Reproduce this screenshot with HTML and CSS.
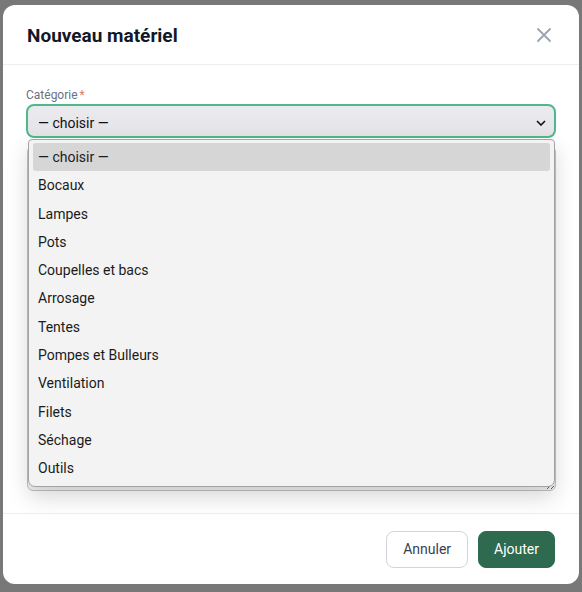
FILE: index.html
```html
<!DOCTYPE html>
<html lang="fr">
<head>
    <meta charset="UTF-8">
    <meta name="viewport" content="width=device-width, initial-scale=1.0">
    <title>Nouveau matériel</title>
    <link rel="stylesheet" href="styles.css">
</head>
<body>

<div class="modal">
    <div class="modal-header">
        <h2>Nouveau matériel</h2>
        <button class="close" aria-label="Fermer">
            <svg width="16" height="16" viewBox="0 0 16 16"><path d="M2 2 L14 14 M14 2 L2 14" stroke="#9ca3af" stroke-width="1.8" stroke-linecap="round" fill="none"/></svg>
        </button>
    </div>

    <div class="modal-body">
        <div class="form-group">
            <label for="categorie">Catégorie<span class="req">*</span></label>
            <div class="select">
                <span>— choisir —</span>
                <svg width="10" height="6" viewBox="0 0 10 6"><path d="M1 1 L5 5 L9 1" stroke="#111" stroke-width="1.6" fill="none"/></svg>
            </div>
            <ul class="dropdown">
                <li class="active">— choisir —</li>
                <li>Bocaux</li>
                <li>Lampes</li>
                <li>Pots</li>
                <li>Coupelles et bacs</li>
                <li>Arrosage</li>
                <li>Tentes</li>
                <li>Pompes et Bulleurs</li>
                <li>Ventilation</li>
                <li>Filets</li>
                <li>Séchage</li>
                <li>Outils</li>
            </ul>
        </div>
        <textarea class="notes"></textarea>
    </div>

    <div class="modal-footer">
        <button class="btn btn-light">Annuler</button>
        <button class="btn btn-primary">Ajouter</button>
    </div>
</div>

</body>
</html>
```

FILE: styles.css
```css
body {
    margin: 0;
    padding: 5px 3px 8px 3px;
    background: #787878;
    font-family: Roboto, "Noto Sans", sans-serif;
    color: #111827;
}
.modal {
    background: #fff;
    border-radius: 12px;
    height: 579px;
    display: flex;
    flex-direction: column;
    overflow: hidden;
}
.modal-header {
    height: 60px;
    box-sizing: border-box;
    padding: 0 24px;
    display: flex;
    align-items: center;
    justify-content: space-between;
    border-bottom: 1px solid #eceef1;
}
.modal-header h2 {
    margin: 2px 0 0 0;
    font-size: 19px;
    font-weight: 700;
    color: #111827;
}
.close {
    border: none;
    background: none;
    padding: 0;
    margin-right: 3px;
    display: flex;
}
.modal-body {
    flex: 1;
    padding: 23px 23px 0 23px;
    display: flex;
    flex-direction: column;
}
.form-group {
    position: relative;
}
.form-group label {
    display: block;
    font-size: 12px;
    color: #6b7280;
    margin-bottom: 2px;
    line-height: 14px;
}
.req {
    color: #e07b6c;
    margin-left: 2px;
}
.select {
    height: 34px;
    box-sizing: border-box;
    border: 2px solid #52b788;
    border-radius: 8px;
    background: linear-gradient(#ebeaef, #e4e3e8);
    display: flex;
    align-items: center;
    justify-content: space-between;
    padding: 3px 8px 0 10px;
    font-size: 14px;
    color: #111;
}
.dropdown {
    position: absolute;
    top: 51px;
    left: 2px;
    right: 1px;
    z-index: 2;
    margin: 0;
    padding: 3px 4px 0 4px;
    height: 348px;
    box-sizing: border-box;
    list-style: none;
    background: #f3f3f3;
    border: 1px solid #a3a3a3;
    border-radius: 4px 4px 7px 7px;
    box-shadow: 0 10px 22px rgba(0, 0, 0, 0.16);
}
.dropdown li {
    height: 28.3px;
    line-height: 28px;
    padding-left: 5px;
    font-size: 14px;
    color: #1b1b1b;
    border-radius: 3px;
}
.dropdown li.active {
    background: #d6d6d6;
}
.notes {
    margin-top: 8px;
    margin-left: 1px;
    height: 345px;
    box-sizing: border-box;
    border: 1px solid #c4c4c4;
    border-radius: 6px;
    background: #f3f3f3;
}
.modal-footer {
    height: 71px;
    box-sizing: border-box;
    border-top: 1px solid #eceef1;
    display: flex;
    justify-content: flex-end;
    align-items: center;
    gap: 10px;
    padding: 0 24px 0 0;
}
.btn {
    height: 37px;
    border-radius: 8px;
    font-family: Roboto, sans-serif;
    font-size: 14px;
    padding: 0 16px;
}
.btn-light {
    background: #fff;
    border: 1px solid #d1d5db;
    color: #374151;
}
.btn-primary {
    background: #2d6a4f;
    border: 1px solid #2d6a4f;
    color: #fff;
    padding: 0 15px;
}
```
